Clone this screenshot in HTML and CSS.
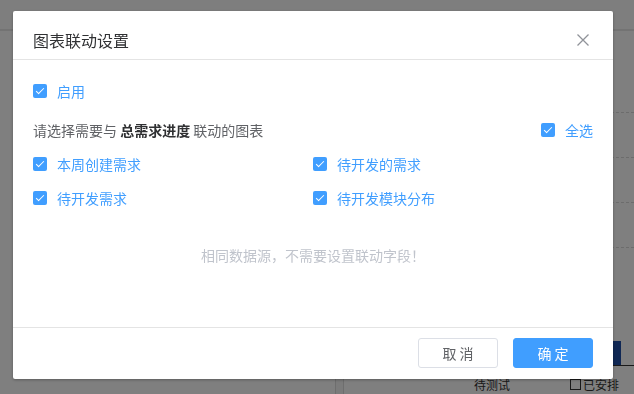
FILE: index.html
```html
<!DOCTYPE html>
<html lang="zh-CN">
<head>
    <meta charset="UTF-8">
    <meta name="viewport" content="width=device-width, initial-scale=1.0">
    <title>图表联动设置</title>
    <link rel="stylesheet" href="styles.css">
</head>
<body>
    <!-- страница под маской -->
    <div class="page">
        <div class="page-top"></div>
        <div class="panels">
            <div class="panel panel-left"></div>
            <div class="panel panel-right">
                <div class="plot">
                    <div class="grid-line"></div>
                    <div class="grid-line"></div>
                    <div class="grid-line"></div>
                    <div class="grid-line"></div>
                    <div class="bars"><span class="bar"></span></div>
                </div>
                <div class="legend">
                    <span>待测试</span>
                    <span class="legend-item"><i class="legend-box"></i>已安排</span>
                </div>
            </div>
        </div>
    </div>

    <div class="mask">
        <div class="dialog">
            <div class="dialog-header">
                <span class="dialog-title">图表联动设置</span>
                <button class="dialog-close">
                    <svg width="12" height="12" viewBox="0 0 12 12"><path d="M0.5 0.5L11.5 11.5M11.5 0.5L0.5 11.5" stroke="#909399" stroke-width="1.3" fill="none"/></svg>
                </button>
            </div>
            <div class="dialog-body">
                <label class="check"><span class="check-box"></span>启用</label>
                <div class="select-row">
                    <span class="select-label">请选择需要与 <b>总需求进度</b> 联动的图表</span>
                    <label class="check"><span class="check-box"></span>全选</label>
                </div>
                <div class="chart-list">
                    <label class="check"><span class="check-box"></span>本周创建需求</label>
                    <label class="check"><span class="check-box"></span>待开发的需求</label>
                    <label class="check"><span class="check-box"></span>待开发需求</label>
                    <label class="check"><span class="check-box"></span>待开发模块分布</label>
                </div>
                <div class="empty">相同数据源，不需要设置联动字段！</div>
            </div>
            <div class="dialog-footer">
                <button class="btn">取 消</button>
                <button class="btn btn-primary">确 定</button>
            </div>
        </div>
    </div>
</body>
</html>
```

FILE: styles.css
```css
body, html {
    margin: 0;
    height: 100%;
    font-family: "Noto Sans CJK SC", "Noto Sans", sans-serif;
    background-color: #ffffff;
    overflow: hidden;
}
.page {
    display: flex;
    flex-direction: column;
    height: 100vh;
}
.page-top {
    height: 29px;
    border-bottom: 2px solid #e6e6e6;
    background-color: #fdfdfd;
}
.panels {
    flex: 1;
    display: flex;
    gap: 7px;
    background-color: #f6f6f6;
}
.panel {
    background-color: #ffffff;
}
.panel-left {
    width: 335px;
    border-right: 1px solid #dcdcdc;
}
.panel-right {
    flex: 1;
    border-left: 1px solid #dcdcdc;
    display: flex;
    flex-direction: column;
}
.plot {
    height: 334px;
    display: flex;
    flex-direction: column;
    border-bottom: 1px solid #333333;
}
.grid-line {
    border-top: 1px dashed #d8d8d8;
    margin-top: 44px;
}
.grid-line:first-child {
    margin-top: 81px;
}
.bars {
    margin-top: auto;
    display: flex;
    justify-content: flex-end;
    padding-right: 13px;
}
.bar {
    width: 8px;
    height: 24px;
    background-color: #1f4fa8;
}
.legend {
    display: flex;
    gap: 60px;
    padding: 10px 0 0 130px;
    font-size: 12px;
    color: #333333;
}
.legend-item {
    display: flex;
    align-items: center;
    gap: 2px;
}
.legend-box {
    width: 9px;
    height: 9px;
    border: 1px solid #333333;
}

/* маска и диалог */
.mask {
    position: fixed;
    top: 0;
    left: 0;
    right: 0;
    bottom: 0;
    background-color: rgba(0, 0, 0, 0.5);
}
.dialog {
    width: 600px;
    margin: 11px 0 0 13px;
    background-color: #ffffff;
    border-radius: 2px;
    box-shadow: 0 1px 3px rgba(0, 0, 0, 0.3);
}
.dialog-header {
    display: flex;
    justify-content: space-between;
    align-items: center;
    padding: 20px 20px 10px;
    border-bottom: 1px solid #e4e4e4;
}
.dialog-title {
    font-size: 16px;
    line-height: 18px;
    color: #303133;
}
.dialog-close {
    border: none;
    background: none;
    padding: 0;
    margin-right: 4px;
    width: 12px;
    height: 12px;
    display: flex;
    cursor: pointer;
}
.dialog-body {
    padding: 21px 20px 62px;
}
.check {
    display: flex;
    align-items: center;
    gap: 10px;
    font-size: 14px;
    line-height: 20px;
    color: #409eff;
    cursor: pointer;
}
.check-box {
    position: relative;
    width: 14px;
    height: 14px;
    border-radius: 2px;
    background-color: #409eff;
    box-sizing: border-box;
}
.check-box::after {
    content: '';
    position: absolute;
    left: 5px;
    top: 2px;
    width: 3px;
    height: 7px;
    border: 1px solid #ffffff;
    border-left: 0;
    border-top: 0;
    transform: rotate(45deg);
}
.select-row {
    display: flex;
    justify-content: space-between;
    align-items: center;
    margin-top: 19px;
}
.select-label {
    font-size: 14px;
    line-height: 20px;
    color: #606266;
}
.select-label b {
    color: #303133;
}
.chart-list {
    display: grid;
    grid-template-columns: 1fr 1fr;
    row-gap: 14px;
    margin-top: 14px;
}
.empty {
    margin-top: 37px;
    text-align: center;
    font-size: 14px;
    line-height: 20px;
    color: #c0c4cc;
}
.dialog-footer {
    display: flex;
    justify-content: flex-end;
    gap: 15px;
    padding: 10px 20px 11px;
    border-top: 1px solid #e4e4e4;
}
.btn {
    width: 80px;
    height: 30px;
    border: 1px solid #dcdfe6;
    border-radius: 3px;
    background-color: #ffffff;
    color: #606266;
    font-family: inherit;
    font-size: 14px;
    cursor: pointer;
}
.btn-primary {
    background-color: #409eff;
    border-color: #409eff;
    color: #ffffff;
}
```
